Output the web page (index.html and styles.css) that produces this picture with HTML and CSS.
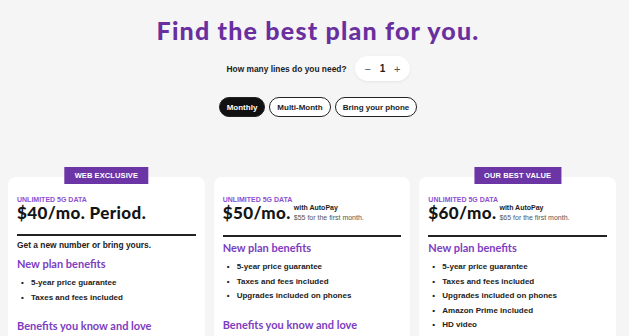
FILE: index.html
```html
<!DOCTYPE html>
<html lang="en">
<head>
<meta charset="utf-8">
<title>Plans</title>
<link rel="stylesheet" href="styles.css">
</head>
<body>
<header class="intro">
  <h1 class="title">Find the best plan for you.</h1>
  <div class="lines">
    <span class="lines-label">How many lines do you need?</span>
    <div class="stepper">
      <span class="step-btn">&minus;</span>
      <span class="step-value">1</span>
      <span class="step-btn">+</span>
    </div>
  </div>
  <div class="toggles">
    <button class="toggle toggle-active">Monthly</button>
    <button class="toggle">Multi-Month</button>
    <button class="toggle">Bring your phone</button>
  </div>
</header>

<main class="plans">
  <section class="card">
    <span class="badge">WEB EXCLUSIVE</span>
    <p class="eyebrow">UNLIMITED 5G DATA</p>
    <div class="price-row"><span class="price">$40/mo. Period.</span></div>
    <div class="rule"></div>
    <p class="note">Get a new number or bring yours.</p>
    <h3 class="benefits-title">New plan benefits</h3>
    <ul class="benefits">
      <li>5-year price guarantee</li>
      <li>Taxes and fees included</li>
    </ul>
    <h3 class="benefits-title benefits-more">Benefits you know and love</h3>
  </section>

  <section class="card">
    <p class="eyebrow">UNLIMITED 5G DATA</p>
    <div class="price-row">
      <span class="price">$50/mo.</span>
      <span class="autopay"><b>with AutoPay</b><span class="first">$55 for the first month.</span></span>
    </div>
    <div class="rule"></div>
    <h3 class="benefits-title">New plan benefits</h3>
    <ul class="benefits">
      <li>5-year price guarantee</li>
      <li>Taxes and fees included</li>
      <li>Upgrades included on phones</li>
    </ul>
    <h3 class="benefits-title benefits-more">Benefits you know and love</h3>
  </section>

  <section class="card">
    <span class="badge">OUR BEST VALUE</span>
    <p class="eyebrow">UNLIMITED 5G DATA</p>
    <div class="price-row">
      <span class="price">$60/mo.</span>
      <span class="autopay"><b>with AutoPay</b><span class="first">$65 for the first month.</span></span>
    </div>
    <div class="rule"></div>
    <h3 class="benefits-title">New plan benefits</h3>
    <ul class="benefits">
      <li>5-year price guarantee</li>
      <li>Taxes and fees included</li>
      <li>Upgrades included on phones</li>
      <li>Amazon Prime included</li>
      <li>HD video</li>
    </ul>
  </section>
</main>
</body>
</html>
```

FILE: styles.css
```css
* { box-sizing: border-box; }

html, body {
  margin: 0;
  padding: 0;
  background: #f5f5f5;
  overflow: hidden;
}

body {
  font-family: "Liberation Sans", Arial, sans-serif;
  color: #1d1d1d;
  height: 336px;
}

.intro {
  display: flex;
  flex-direction: column;
  align-items: center;
  padding: 15px 0 0 7px;
}

.title {
  margin: 0;
  font-family: Lato, "Open Sans", sans-serif;
  font-weight: 900;
  font-size: 25px;
  line-height: 30px;
  letter-spacing: 1.2px;
  color: #6a2f9f;
}

.lines {
  display: flex;
  align-items: center;
  gap: 8px;
  margin-top: 11px;
}

.lines-label {
  font-size: 8.4px;
  font-weight: 700;
  color: #222;
}

.stepper {
  width: 55px;
  height: 25px;
  border-radius: 13px;
  background: #fff;
  box-shadow: 0 1px 3px rgba(0, 0, 0, 0.07);
  display: flex;
  align-items: center;
  justify-content: space-between;
  padding: 0 9px 0 10px;
  font-size: 10px;
  color: #333;
}

.step-btn {
  color: #555;
  font-size: 11px;
}

.step-value {
  font-weight: 700;
  color: #222;
}

.toggles {
  display: flex;
  gap: 4px;
  margin-top: 16px;
}

.toggle {
  height: 20px;
  border: 1px solid #222;
  border-radius: 10px;
  background: #fff;
  padding: 0 7px;
  font-family: "Liberation Sans", Arial, sans-serif;
  font-size: 8px;
  font-weight: 700;
  color: #1d1d1d;
}

.toggle-active {
  background: #111;
  color: #fff;
}

.plans {
  display: grid;
  grid-template-columns: repeat(3, 1fr);
  gap: 9px;
  margin: 60px 13px 0 8px;
}

.card {
  position: relative;
  background: #fff;
  border-radius: 8px;
  padding: 18px 9px 0;
  min-height: 200px;
}

.badge {
  position: absolute;
  top: -10px;
  left: 50%;
  transform: translateX(-50%);
  height: 17px;
  padding: 0 10px;
  background: #6c35a6;
  color: #fff;
  font-size: 7.5px;
  font-weight: 700;
  line-height: 17px;
  white-space: nowrap;
  letter-spacing: 0.1px;
}

.eyebrow {
  margin: 0;
  font-size: 7px;
  line-height: 9px;
  font-weight: 700;
  color: #8e4fd1;
}

.price-row {
  display: flex;
  align-items: flex-start;
  gap: 3px;
}

.price {
  font-family: Lato, "Open Sans", sans-serif;
  font-weight: 900;
  font-size: 17px;
  line-height: 18px;
  letter-spacing: 0.4px;
  color: #151515;
}

.autopay {
  display: flex;
  flex-direction: column;
  margin-top: -1px;
  font-size: 7px;
  line-height: 10px;
  color: #222;
}

.autopay b {
  font-weight: 700;
}

.first {
  color: #555;
}

.rule {
  height: 2px;
  background: #222;
  margin-top: 12px;
}

.note {
  margin: 4px 0 0;
  font-size: 8.4px;
  line-height: 10px;
  font-weight: 700;
  color: #222;
}

.note + .benefits-title {
  margin-top: 7px;
}

.benefits-title {
  margin: 4px 0 0;
  font-family: Lato, "Open Sans", sans-serif;
  font-weight: 700;
  font-size: 11px;
  line-height: 14px;
  color: #7d3dbf;
}

.benefits-more {
  margin-top: 14px;
}

.benefits {
  list-style: none;
  margin: 5px 0 0;
  padding: 0 0 0 14px;
}

.benefits li {
  position: relative;
  font-size: 8px;
  line-height: 14.5px;
  font-weight: 700;
  color: #222;
}

.benefits li::before {
  content: "•";
  position: absolute;
  left: -10px;
}
```
